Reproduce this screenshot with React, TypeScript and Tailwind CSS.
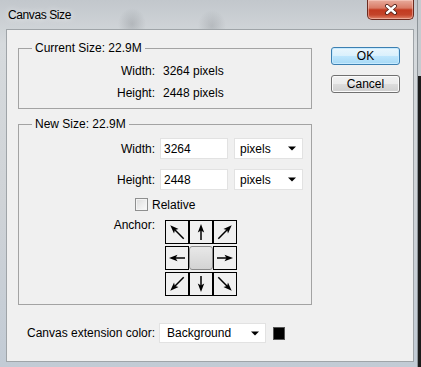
import React from "react";

type ArrowProps = { angle: number; len: number };

// one arrow glyph of the anchor grid, drawn pointing up and rotated
function Arrow({ angle, len }: ArrowProps) {
  const tip = 11 - len / 2;
  const tail = 11 + len / 2;
  return (
    <svg width="22" height="22" viewBox="0 0 22 22">
      <g transform={`rotate(${angle} 11 11)`}>
        <line x1="11" y1={tail} x2="11" y2={tip + 5} stroke="black" strokeWidth="1.5" />
        <polygon points={`11,${tip} 7.8,${tip + 8.5} 11,${tip + 6.5} 14.2,${tip + 8.5}`} fill="black" />
      </g>
    </svg>
  );
}

function Caret() {
  return (
    <svg width="8" height="5" viewBox="0 0 8 5">
      <polygon points="0,0.5 8,0.5 4,4.5" fill="black" />
    </svg>
  );
}

function Select({ value, className, pad }: { value: string; className: string; pad: string }) {
  return (
    <div className={`flex items-center justify-between bg-white border border-[#e2e2e2] pr-[6px] ${pad} ${className}`}>
      <span>{value}</span>
      <Caret />
    </div>
  );
}

const anchorRows: (number | null)[][] = [
  [-45, 0, 45],
  [-90, null, 90],
  [-135, 180, 135],
];

function AnchorGrid() {
  return (
    <div className="flex flex-col gap-[2px]">
      {anchorRows.map((row, i) => (
        <div key={i} className="flex">
          {row.map((a, j) =>
            a === null ? (
              <div
                key={j}
                className="w-[24px] h-[24px] rounded-[3px] border border-[#8a8a8a] bg-[linear-gradient(180deg,#e8e8e8,#d3d3d3)]"
              />
            ) : (
              <div key={j} className="w-[24px] h-[24px] border border-black bg-[#f0f0f0]">
                <Arrow angle={a} len={a % 90 === 0 ? 16 : 19} />
              </div>
            )
          )}
        </div>
      ))}
    </div>
  );
}

function Group({ title, children, className = "" }: { title: string; children: React.ReactNode; className?: string }) {
  return (
    <fieldset className={`w-[294px] border border-[#a3a3a3] ${className}`}>
      <legend className="ml-[13px] px-[3px] leading-[14px]">{title}</legend>
      {children}
    </fieldset>
  );
}

export default function App() {
  return (
    <div className="w-[421px] h-[367px] overflow-hidden bg-[linear-gradient(180deg,#c6cbcf_0px,#c6cbcf_76px,#1c1c1c_76px)] font-['Liberation_Sans',Arial,sans-serif] text-[12px] leading-[14px] text-black">
      <div className="h-full w-[418px] flex flex-col pl-[6px] pr-[4px] bg-[radial-gradient(ellipse_14px_16px_at_132px_24px,rgba(110,115,120,0.28),transparent),radial-gradient(ellipse_14px_16px_at_212px_26px,rgba(110,115,120,0.25),transparent),linear-gradient(180deg,#c2c7cc_0%,#d6dadd_12%,#cfd3d7_55%,#c2cbd5_100%)] shadow-[inset_-1px_0_0_#8d9499]">
        {/* title bar */}
        <div className="h-[29px] flex items-start justify-between">
          <div className="pl-[2px] pt-[8px] tracking-[-0.4px] [text-shadow:0_0_6px_rgba(255,255,255,0.9)]">Canvas Size</div>
          <div className="w-[47px] h-[20px] rounded-b-[5px] border border-t-0 border-[#6b2b20] bg-[linear-gradient(180deg,#e8ab9c_0%,#d97b66_42%,#c23a20_52%,#c4442a_78%,#e0846a_100%)] shadow-[inset_0_0_0_1px_rgba(255,220,210,0.45)] flex items-center justify-center">
            <svg width="14" height="11" viewBox="0 0 14 11">
              <path d="M3 2 L11 9 M11 2 L3 9" stroke="#4a1a12" strokeWidth="4" strokeLinecap="round" />
              <path d="M3 2 L11 9 M11 2 L3 9" stroke="white" strokeWidth="2.4" strokeLinecap="round" />
            </svg>
          </div>
        </div>

        {/* client area */}
        <div className="w-[408px] h-[333px] border border-[#9fa4a8] bg-[#f0f0f0] flex flex-col">
          <div className="flex">
            <div className="ml-[11px] mt-[11px]">
              <Group title="Current Size: 22.9M">
                <div className="pt-[5px] pb-[4px]">
                  <div className="h-[22px] flex items-center">
                    <span className="w-[136px] text-right">Width:</span>
                    <span className="pl-[8px]">3264 pixels</span>
                  </div>
                  <div className="h-[22px] flex items-center">
                    <span className="w-[136px] text-right">Height:</span>
                    <span className="pl-[8px]">2448 pixels</span>
                  </div>
                </div>
              </Group>

              <Group title="New Size: 22.9M" className="mt-[8px]">
                <div className="pt-[7px] pb-[8px]">
                  <div className="h-[21px] flex items-center">
                    <span className="w-[136px] text-right">Width:</span>
                    <div className="ml-[5px] w-[68px] h-[21px] bg-white border border-[#e2e2e2] pl-[3px] flex items-center">3264</div>
                    <Select value="pixels" className="ml-[6px] w-[69px] h-[21px]" pad="pl-[5px]" />
                  </div>
                  <div className="mt-[10px] h-[21px] flex items-center">
                    <span className="w-[136px] text-right">Height:</span>
                    <div className="ml-[5px] w-[68px] h-[21px] bg-white border border-[#e2e2e2] pl-[3px] flex items-center">2448</div>
                    <Select value="pixels" className="ml-[6px] w-[69px] h-[21px]" pad="pl-[5px]" />
                  </div>
                  <div className="mt-[8px] h-[13px] flex items-center pl-[116px]">
                    <div className="w-[13px] h-[13px] border border-[#8e8f8f] bg-[linear-gradient(135deg,#dcdcdc,#fbfbfb)] shadow-[inset_0_0_0_1px_#f4f4f4]" />
                    <span className="ml-[4px]">Relative</span>
                  </div>
                  <div className="mt-[9px] flex items-start">
                    <span className="w-[136px] text-right leading-[10px]">Anchor:</span>
                    <div className="ml-[10px]">
                      <AnchorGrid />
                    </div>
                  </div>
                </div>
              </Group>
            </div>

            <div className="ml-[19px] mt-[17px] flex flex-col gap-[10px]">
              <button className="w-[69px] h-[18px] rounded-[3px] border border-[#3c7fb1] bg-[linear-gradient(180deg,#eaf6fd_0%,#d9f0fc_50%,#bee6fd_50%,#a7d9f5_100%)] shadow-[inset_0_0_0_1px_#c6eaff] flex items-center justify-center">
                OK
              </button>
              <button className="w-[69px] h-[18px] rounded-[3px] border border-[#707070] bg-[linear-gradient(180deg,#f2f2f2_0%,#ebebeb_50%,#dddddd_50%,#cfcfcf_100%)] shadow-[inset_0_0_0_1px_#fbfbfb] flex items-center justify-center">
                Cancel
              </button>
            </div>
          </div>

          <div className="mt-[18px] pl-[20px] flex items-center">
            <span>Canvas extension color:</span>
            <Select value="Background" className="ml-[4px] w-[107px] h-[20px]" pad="pl-[7px]" />
            <div className="ml-[7px] w-[12px] h-[13px] bg-black border border-[#555]" />
          </div>
        </div>
      </div>
    </div>
  );
}
